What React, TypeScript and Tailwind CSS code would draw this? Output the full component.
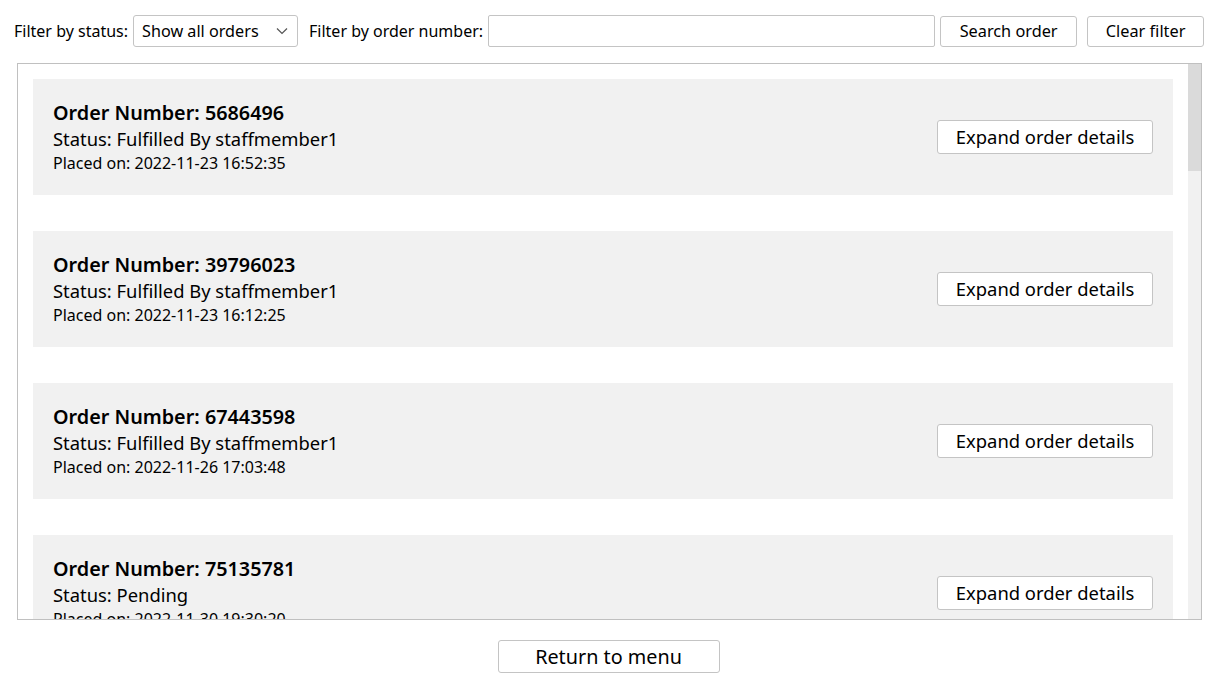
import React from "react";

const orders = [
  { num: "5686496", status: "Fulfilled By staffmember1", placed: "2022-11-23 16:52:35" },
  { num: "39796023", status: "Fulfilled By staffmember1", placed: "2022-11-23 16:12:25" },
  { num: "67443598", status: "Fulfilled By staffmember1", placed: "2022-11-26 17:03:48" },
  { num: "75135781", status: "Pending", placed: "2022-11-30 19:30:20" },
  { num: "81234567", status: "Pending", placed: "2022-12-01 10:11:12" },
];

export default function App() {
  return (
    <div
      className="w-[1217px] h-[683px] bg-white text-black overflow-hidden"
      style={{ fontFamily: '"Noto Sans", "Open Sans", sans-serif' }}
    >
      <div className="flex items-center h-[32px] mt-[15px] pl-[14px]">
        <span className="text-[16px] mr-[5px] leading-none">Filter by status:</span>
        <div className="flex-none flex items-center justify-between w-[165px] h-[32px] border border-[#c4c4c4] rounded-[3px] pl-[8px] pr-[8px] text-[16.2px]">
          <span>Show all orders</span>
          <svg width="12" height="8" viewBox="0 0 12 8" className="mr-[1px]">
            <path d="M1 1.5 L6 6.5 L11 1.5" fill="none" stroke="#555" strokeWidth="1.2" />
          </svg>
        </div>
        <span className="text-[16px] ml-[11px] mr-[5px] leading-none">Filter by order number:</span>
        <div className="flex-none w-[447px] h-[32px] border border-[#c4c4c4] rounded-[2px]" />
        <button className="flex-none ml-[5px] w-[137px] h-[31px] border border-[#c4c4c4] rounded-[3px] bg-white text-[16.3px]">
          Search order
        </button>
        <button className="flex-none ml-[10px] w-[117px] h-[31px] border border-[#c4c4c4] rounded-[3px] bg-white text-[16.3px]">
          Clear filter
        </button>
      </div>

      <div className="ml-[17px] mt-[16px] w-[1185px] h-[557px] border border-[#c0c0c0] flex overflow-hidden">
        <div className="flex-1 overflow-hidden pl-[15px] pr-[15px] pt-[15px] flex flex-col gap-[36px]">
          {orders.map((o) => (
            <div
              key={o.num}
              className="shrink-0 h-[116px] bg-[#f1f1f1] flex items-center justify-between pl-[20px] pr-[20px]"
            >
              <div className="flex flex-col">
                <div className="text-[19.8px] font-semibold leading-[27px]">Order Number: {o.num}</div>
                <div className="text-[18.4px] leading-[26px]">Status: {o.status}</div>
                <div className="text-[16px] leading-[23px]">Placed on: {o.placed}</div>
              </div>
              <button className="w-[216px] h-[34px] border border-[#c4c4c4] rounded-[3px] bg-white text-[18.4px]">
                Expand order details
              </button>
            </div>
          ))}
        </div>
        <div className="w-[13px] bg-[#f1f1f1] flex flex-col">
          <div className="h-[107px] bg-[#dadada]" />
        </div>
      </div>

      <div className="flex justify-center mt-[20px]">
        <button className="w-[222px] h-[33px] border border-[#c4c4c4] rounded-[3px] bg-white text-[19.8px]">
          Return to menu
        </button>
      </div>
    </div>
  );
}
